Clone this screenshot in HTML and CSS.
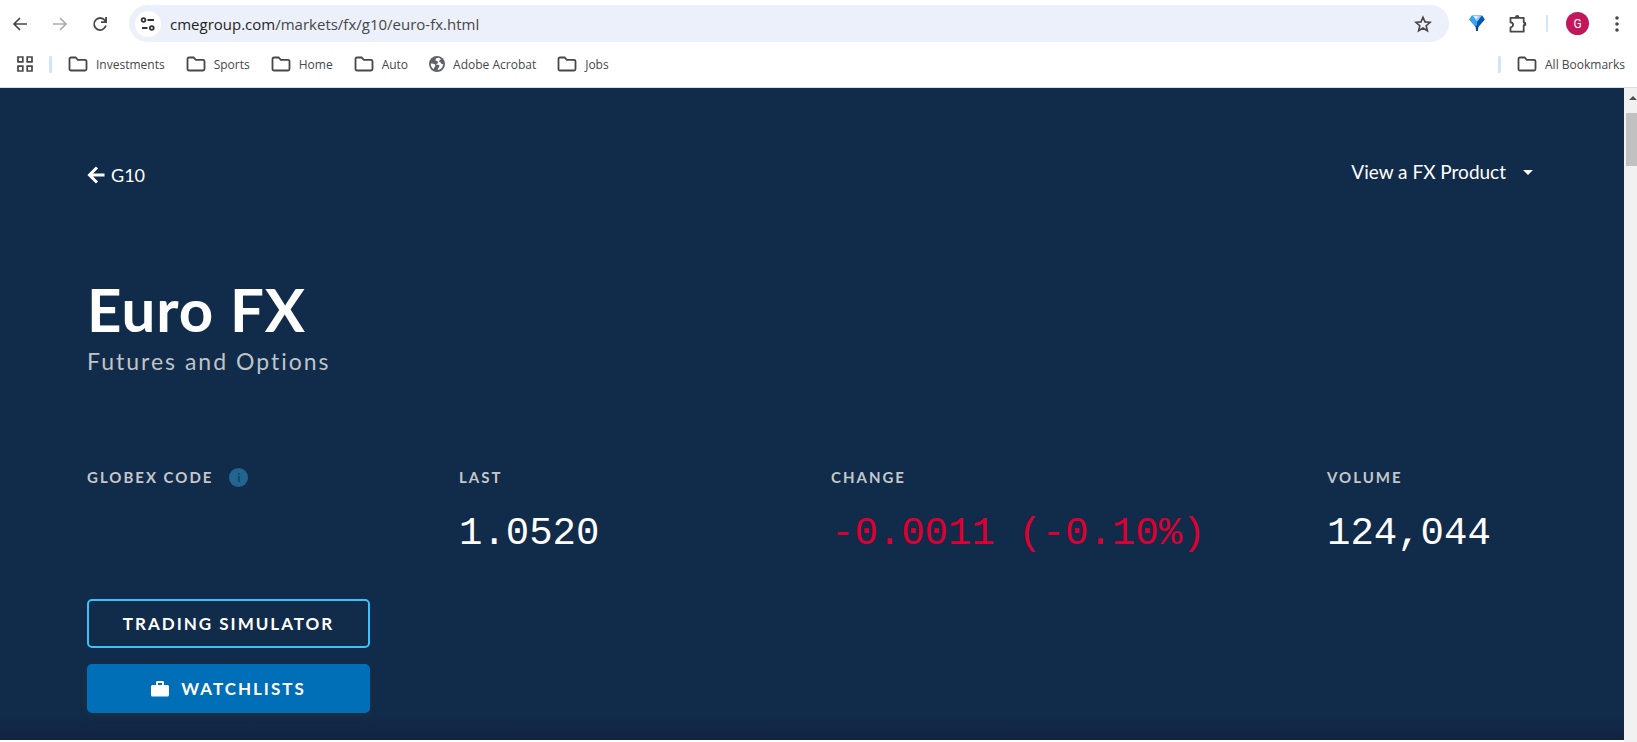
FILE: index.html
```html
<!DOCTYPE html>
<html lang="en">
<head>
  <meta charset="UTF-8" />
  <meta name="viewport" content="width=device-width, initial-scale=1.0" />
  <title>Euro FX Futures and Options</title>
  <link rel="stylesheet" href="styles.css">
</head>
<body>

  <!-- Shared icon shapes -->
  <svg class="icon-defs" aria-hidden="true">
    <symbol id="folder" viewBox="0 0 20 16">
      <path d="M3 1.5h4.6l2.2 2.3H17c.9 0 1.5.6 1.5 1.5v7.7c0 .9-.6 1.5-1.5 1.5H3c-.9 0-1.5-.6-1.5-1.5V3c0-.9.6-1.5 1.5-1.5z" fill="none" stroke="#474747" stroke-width="1.8"/>
    </symbol>
  </svg>

  <!-- Browser bars -->
  <header class="browser">
    <div class="toolbar">
      <div class="nav-buttons">
        <button type="button" aria-label="Back">
          <svg width="16" height="16" viewBox="0 0 16 16" fill="none" stroke="#474747" stroke-width="1.7"><path d="M15 8H2.5M8 2L2 8l6 6"/></svg>
        </button>
        <button type="button" aria-label="Forward" disabled>
          <svg width="16" height="16" viewBox="0 0 16 16" fill="none" stroke="#acacac" stroke-width="1.7"><path d="M1 8h12.5M8 2l6 6-6 6"/></svg>
        </button>
        <button type="button" aria-label="Reload">
          <svg width="16" height="16" viewBox="0 0 16 16" fill="none" stroke="#474747" stroke-width="1.8"><path d="M13.9 9.5A6 6 0 1 1 12.8 4.3L14 5.6M14.1 1v5.2H9"/></svg>
        </button>
      </div>
      <div class="address-bar">
        <button type="button" class="site-info" aria-label="View site information">
          <svg width="16" height="14" viewBox="0 0 16 14" fill="none" stroke="#303030" stroke-width="1.8"><circle cx="3.5" cy="3" r="1.9"/><path d="M7.5 3H14M2 11h5.5"/><circle cx="11.8" cy="11" r="1.9"/></svg>
        </button>
        <a class="url" href="#">cmegroup.com<span>/markets/fx/g10/euro-fx.html</span></a>
        <button type="button" class="star" aria-label="Bookmark this tab">
          <svg width="18" height="18" viewBox="0 0 18 18" fill="none" stroke="#474747" stroke-width="1.6"><path d="M9 2.2l2 4.700 5.100.4-3.900 3.400 1.200 5L9 13l-4.400 2.700 1.200-5L1.900 7.300 7 6.900z"/></svg>
        </button>
      </div>
      <div class="extensions">
        <button type="button" class="gem" aria-label="Gem extension">
          <svg width="16" height="17" viewBox="0 0 16 17">
            <path d="M3 .5h10l2.700 4L9 12.500V16H7v-3.500L.3 4.500z" fill="#1473d8"/>
            <path d="M3 .5h10L8 7z" fill="#8fd0ff"/>
            <path d="M.3 4.500L3 .5 8 7v6z" fill="#3aa2f5"/>
            <path d="M15.700 4.500L13 .5 8 7v6z" fill="#0756b4"/>
            <path d="M5 1.200h4L7 4z" fill="#fff"/>
            <path d="M6.500 10.500h3L9 16H7z" fill="#164873"/>
          </svg>
        </button>
        <button type="button" aria-label="Extensions">
          <svg width="20" height="20" viewBox="0 0 20 20"><path d="M2.500 3.800h13.200v4.800c2.200-.3 2.200 2.900 0 2.600v6.500H2.500v-4.400c3.400 0 3.400-5 0-5z" fill="none" stroke="#474747" stroke-width="1.8" stroke-linejoin="round"/><path d="M7 3.300a2.200 2.200 0 0 1 4.400 0zM16 7.700a2.200 2.200 0 0 1 0 4.400z" fill="#474747"/></svg>
        </button>
        <span class="divider thin"></span>
        <button type="button" class="avatar" aria-label="Profile">G</button>
        <button type="button" class="menu" aria-label="Browser menu">
          <svg width="4" height="16" viewBox="0 0 4 16" fill="#474747"><circle cx="2" cy="2" r="1.8"/><circle cx="2" cy="8" r="1.8"/><circle cx="2" cy="14" r="1.8"/></svg>
        </button>
      </div>
    </div>

    <nav class="bookmarks">
      <button type="button" aria-label="Apps">
        <svg width="16" height="16" viewBox="0 0 16 16" fill="none" stroke="#474747" stroke-width="1.7"><path d="M1 1h4.800v4.800H1zM10.200 1H15v4.800h-4.800zM1 10.200h4.800V15H1zM10.200 10.200H15V15h-4.800z"/></svg>
      </button>
      <span class="divider"></span>
      <a href="#"><svg class="folder"><use href="#folder"/></svg>Investments</a>
      <a href="#"><svg class="folder"><use href="#folder"/></svg>Sports</a>
      <a href="#"><svg class="folder"><use href="#folder"/></svg>Home</a>
      <a href="#"><svg class="folder"><use href="#folder"/></svg>Auto</a>
      <a href="#">
        <svg width="16" height="16" viewBox="0 0 16 16"><circle cx="8" cy="8" r="8" fill="#5f6368"/><path d="M9.500 1.800c-1.800 0-3 .8-3 2.200 0 1.500 2.500.7 2.500 2.400 0 1.400-1.900 1-1.900 2.400 1.700 0 3.300-.2 3.300 1.300 0 1.500-1.700 1.600-1.700 3.900 3.200-.5 5.500-3.100 5.500-6-1.300.4-1.900-.2-2.300-1-.5-1.100-1.700-.6-1.700-1.900 0-1.200 1.200-1 1.700-1.800a6 6 0 0 0-2.400-1.500zM1.800 7.500c2.300-.4 4.600.4 4.500 2.200 0 1.500-1.500 1-1.300 3.600-2.100-1.100-3.400-3.400-3.200-5.800z" fill="#fff"/></svg>
        Adobe Acrobat
      </a>
      <a href="#"><svg class="folder"><use href="#folder"/></svg>Jobs</a>
      <span class="divider push-right"></span>
      <a href="#"><svg class="folder"><use href="#folder"/></svg>All Bookmarks</a>
    </nav>
  </header>

  <div class="viewport">
    <!-- Product page -->
    <main>
      <div class="top-links">
        <a class="back-link" href="#">
          <svg width="18" height="18" viewBox="0 0 18 18" fill="none" stroke="#fff" stroke-width="3"><path d="M17.500 9H2.500M10 1.500L2.500 9l7.500 7.500"/></svg>
          G10
        </a>
        <button type="button" class="product-menu">
          View a FX Product
          <svg width="10" height="5" viewBox="0 0 10 5" fill="#fff"><path d="M0 0h10L5 5z"/></svg>
        </button>
      </div>

      <h1>Euro FX</h1>
      <p class="subtitle">Futures and Options</p>

      <dl class="quote">
        <div>
          <dt>GLOBEX CODE
            <button type="button" class="info" aria-label="About Globex code">i</button>
          </dt>
        </div>
        <div>
          <dt>LAST</dt>
          <dd>1.0520</dd>
        </div>
        <div>
          <dt>CHANGE</dt>
          <dd class="negative">-0.0011 (-0.10%)</dd>
        </div>
        <div>
          <dt>VOLUME</dt>
          <dd>124,044</dd>
        </div>
      </dl>

      <div class="actions">
        <button type="button" class="btn btn-outline">TRADING SIMULATOR</button>
        <button type="button" class="btn btn-primary">
          <svg width="18" height="16" viewBox="0 0 18 16" fill="#fff"><path d="M1.500 4H5V1.500C5 .7 5.700 0 6.500 0h5c.8 0 1.500.7 1.500 1.500V4h3.500c.8 0 1.500.7 1.500 1.500v8.500c0 .8-.7 1.500-1.500 1.500h-15C.7 15.500 0 14.800 0 14V5.500C0 4.700.7 4 1.500 4zM7 4h4V2H7z"/></svg>
          WATCHLISTS
        </button>
      </div>
    </main>

    <div class="scrollbar">
      <svg width="8" height="4" viewBox="0 0 8 4" fill="#505050"><path d="M0 4l4-4 4 4z"/></svg>
      <span class="thumb"></span>
    </div>
  </div>

</body>
</html>
```
FILE: styles.css
```css
* {
  box-sizing: border-box;
}

body {
  margin: 0;
  min-height: 100vh;
  display: flex;
  flex-direction: column;
  background: #fff;
  font-family: Lato, sans-serif;
}

button {
  padding: 0;
  border: 0;
  background: none;
  color: inherit;
  font: inherit;
  cursor: pointer;
}

a {
  color: inherit;
  text-decoration: none;
}

svg {
  display: block;
  flex: none;
}

.icon-defs {
  position: absolute;
  width: 0;
  height: 0;
}

/* Browser bars */
.browser {
  height: 88px;
  padding-top: 5px;
  border-bottom: 1px solid #dcdde0;
  font-family: "Open Sans", sans-serif;
  color: #474747;
}

.toolbar {
  display: flex;
  align-items: center;
  padding: 0 18px 0 12px;
}

.nav-buttons {
  display: flex;
  gap: 24px;
  margin-right: 21px;
}

.address-bar {
  flex: 1;
  display: flex;
  align-items: center;
  height: 37px;
  padding: 0 17px 0 6px;
  border-radius: 19px;
  background: #ecf0fa;
}

.site-info {
  display: flex;
  align-items: center;
  justify-content: center;
  width: 26px;
  height: 26px;
  border-radius: 50%;
  background: #fff;
}

.url {
  flex: 1;
  margin-left: 9px;
  font-size: 15px;
  line-height: 20px;
  color: #1f1f1f;
}

.url span {
  color: #474747;
}

.extensions {
  display: flex;
  align-items: center;
  margin-left: 20px;
  gap: 18px;
}

.gem {
  margin-right: 5px;
}

.divider {
  width: 3px;
  height: 17px;
  border-radius: 1px;
  background: #d3e3fd;
}

.thin {
  width: 2px;
}

.avatar {
  width: 23px;
  height: 23px;
  border-radius: 50%;
  background: #c2185b;
  color: #fff;
  font-family: Roboto, sans-serif;
  font-size: 12px;
}

.menu {
  margin-left: 8px;
}

.bookmarks {
  display: flex;
  align-items: center;
  gap: 21px;
  height: 44px;
  padding: 0 12px 0 17px;
  font-size: 12px;
}

.bookmarks a {
  display: flex;
  align-items: center;
  gap: 8px;
}

.bookmarks .divider {
  margin-left: -5px;
  margin-right: -5px;
}

.bookmarks .push-right {
  margin-left: auto;
}

.folder {
  width: 20px;
  height: 16px;
}

/* Page area */
.viewport {
  flex: 1;
  display: flex;
}

main {
  flex: 1;
  margin-bottom: 2px;
  padding: 72px 49px 27px 87px;
  background: linear-gradient(to top, #11233f, #112b4a 24px);
  color: #fff;
}

.top-links {
  display: flex;
  justify-content: space-between;
  align-items: flex-start;
  padding-right: 42px;
}

.back-link,
.product-menu {
  display: flex;
  align-items: center;
}

.back-link {
  gap: 6px;
  font-size: 18px;
  line-height: 30px;
}

.product-menu {
  gap: 17px;
  font-size: 19px;
  line-height: 24px;
}

h1 {
  margin: 85px 0 0;
  font-size: 60px;
  line-height: 68px;
  letter-spacing: 1px;
}

.subtitle {
  margin: 2px 0 0;
  font-size: 23px;
  line-height: 32px;
  letter-spacing: 2px;
  color: #bfc4c8;
}

/* Quote figures */
.quote {
  display: grid;
  grid-template-columns: 3fr 3fr 4fr 2fr;
  margin: 90px 0 0;
}

dt {
  display: flex;
  align-items: center;
  gap: 16px;
  height: 20px;
  font-size: 15px;
  font-weight: bold;
  letter-spacing: 2px;
  color: #c4c8ca;
}

.info {
  width: 19px;
  height: 19px;
  border-radius: 50%;
  background: #22668f;
  color: #123f63;
  font-size: 12px;
  letter-spacing: 0;
}

dd {
  margin: 22px 0 0;
  font-family: "Liberation Mono", monospace;
  font-size: 39px;
  line-height: 50px;
  white-space: nowrap;
}

.negative {
  color: #dc0032;
}

/* Buttons */
.actions {
  display: flex;
  flex-direction: column;
  gap: 16px;
  width: 19%;
  min-width: 283px;
  margin-top: 40px;
}

.btn {
  display: flex;
  align-items: center;
  justify-content: center;
  gap: 12px;
  height: 49px;
  border-radius: 5px;
  font-size: 17px;
  font-weight: bold;
  letter-spacing: 2px;
}

.btn-outline {
  border: 2px solid #3cc1fc;
}

.btn-primary {
  background: #006fb8;
  box-shadow: 0 2px 6px rgba(60, 60, 60, 0.4);
}

/* Scrollbar strip */
.scrollbar {
  width: 13px;
  padding: 8px 0 0 2px;
  background: #f1f1f1;
  overflow: hidden;
}

.scrollbar svg {
  margin-left: 3px;
}

.thumb {
  display: block;
  height: 53px;
  margin-top: 13px;
  background: #c1c1c1;
}
```
